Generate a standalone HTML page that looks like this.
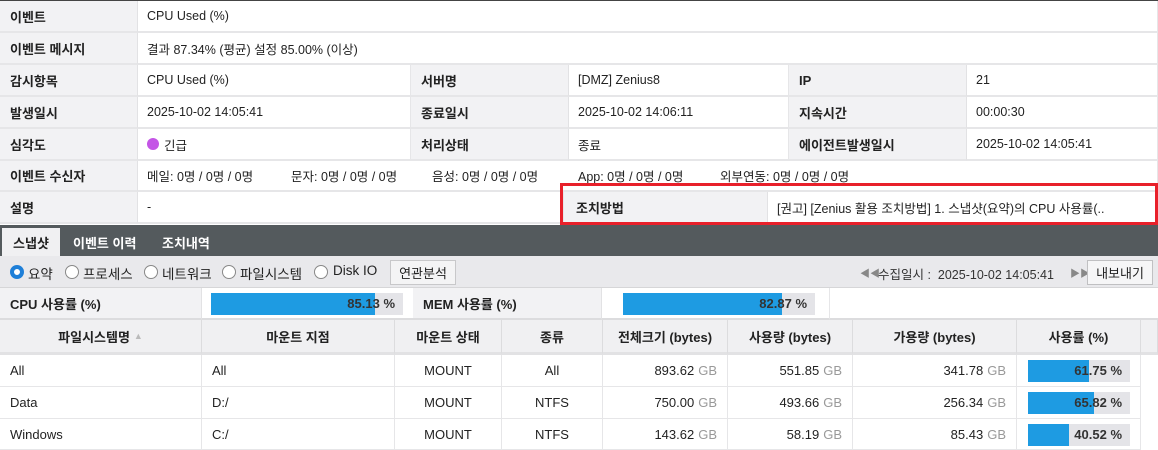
<!DOCTYPE html>
<html><head><meta charset="utf-8"><style>
*{box-sizing:border-box;margin:0;padding:0}
body{width:1158px;height:450px;overflow:hidden;background:#fff;font-family:"Liberation Sans","Noto Sans CJK KR",sans-serif;font-size:12.5px;color:#222;position:relative}
.a{position:absolute}
.l{background:#f2f2f4;font-weight:bold;font-size:13px;padding-left:10px;display:flex;align-items:center;border-right:1px solid #e2e2e4;border-bottom:2px solid #e6e6e8}
.v{padding-left:9px;display:flex;align-items:center;border-bottom:2px solid #e6e6e8;border-right:1px solid #e6e6e8;white-space:nowrap}
.th{background:#f0f0f2;font-weight:bold;font-size:13px;display:flex;align-items:center;justify-content:center;border-right:1px solid #dcdcde;border-bottom:3px solid #e2e2e4}
.td{display:flex;align-items:center;border-right:1px solid #e6e6e8;border-bottom:1px solid #e6e6e8;padding:0 10px;font-size:13px}
.r{justify-content:flex-end}.c{justify-content:center}
.gb{color:#999;margin-left:4px}
.bar{position:absolute;height:22px;background:#e4e4e8}
.bar i{position:absolute;left:0;top:0;bottom:0;background:#1e9be2}
.bar span{position:absolute;right:8px;top:3px;font-weight:bold;color:#333;font-size:13px}
.rad{position:absolute;top:265px;width:14px;height:14px;border:1px solid #888;border-radius:50%;background:#fff}
.rt{position:absolute;top:263px;font-size:13.5px}
</style></head><body>
<div class="a" style="left:0;top:0;width:1158px;height:1px;background:#444"></div>
<div class="a l" style="left:0;top:1px;width:138px;height:32px">이벤트</div>
<div class="a v" style="left:138px;top:1px;width:1020px;height:32px">CPU Used (%)</div>
<div class="a l" style="left:0;top:33px;width:138px;height:32px">이벤트 메시지</div>
<div class="a v" style="left:138px;top:33px;width:1020px;height:32px">결과 87.34% (평균) 설정 85.00% (이상)</div>

<div class="a l" style="left:0;top:65px;width:138px;height:32px">감시항목</div>
<div class="a v" style="left:138px;top:65px;width:273px;height:32px">CPU Used (%)</div>
<div class="a l" style="left:411px;top:65px;width:158px;height:32px">서버명</div>
<div class="a v" style="left:569px;top:65px;width:220px;height:32px">[DMZ] Zenius8</div>
<div class="a l" style="left:789px;top:65px;width:178px;height:32px">IP</div>
<div class="a v" style="left:967px;top:65px;width:191px;height:32px">21</div>

<div class="a l" style="left:0;top:97px;width:138px;height:32px">발생일시</div>
<div class="a v" style="left:138px;top:97px;width:273px;height:32px">2025-10-02 14:05:41</div>
<div class="a l" style="left:411px;top:97px;width:158px;height:32px">종료일시</div>
<div class="a v" style="left:569px;top:97px;width:220px;height:32px">2025-10-02 14:06:11</div>
<div class="a l" style="left:789px;top:97px;width:178px;height:32px">지속시간</div>
<div class="a v" style="left:967px;top:97px;width:191px;height:32px">00:00:30</div>

<div class="a l" style="left:0;top:129px;width:138px;height:32px">심각도</div>
<div class="a v" style="left:138px;top:129px;width:273px;height:32px"><span style="display:inline-block;width:12px;height:12px;border-radius:50%;background:#c455e6;margin-right:5px"></span>긴급</div>
<div class="a l" style="left:411px;top:129px;width:158px;height:32px">처리상태</div>
<div class="a v" style="left:569px;top:129px;width:220px;height:32px">종료</div>
<div class="a l" style="left:789px;top:129px;width:178px;height:32px">에이전트발생일시</div>
<div class="a v" style="left:967px;top:129px;width:191px;height:32px">2025-10-02 14:05:41</div>

<div class="a l" style="left:0;top:161px;width:138px;height:31px">이벤트 수신자</div>
<div class="a v" style="left:138px;top:161px;width:1020px;height:31px"><span style="width:144px">메일: 0명 / 0명 / 0명</span><span style="width:141px">문자: 0명 / 0명 / 0명</span><span style="width:146px">음성: 0명 / 0명 / 0명</span><span style="width:142px">App: 0명 / 0명 / 0명</span><span>외부연동: 0명 / 0명 / 0명</span></div>

<div class="a l" style="left:0;top:192px;width:138px;height:32px">설명</div>
<div class="a v" style="left:138px;top:192px;width:426px;height:32px">-</div>
<div class="a l" style="left:564px;top:192px;width:204px;height:32px;padding-left:12px">조치방법</div>
<div class="a v" style="left:768px;top:192px;width:390px;height:32px;overflow:hidden">[권고] [Zenius 활용 조치방법] 1. 스냅샷(요약)의 CPU 사용률(..</div>
<div class="a" style="left:560px;top:183px;width:598px;height:42px;border:3px solid #e8202a"></div>

<div class="a" style="left:0;top:225px;width:1158px;height:31px;background:#545a5d"></div>
<div class="a" style="left:2px;top:228px;width:58px;height:28px;background:#f0f0f2;font-weight:bold;font-size:13px;display:flex;align-items:center;justify-content:center">스냅샷</div>
<div class="a" style="left:73px;top:228px;height:28px;color:#fff;font-weight:bold;font-size:13px;display:flex;align-items:center">이벤트 이력</div>
<div class="a" style="left:162px;top:228px;height:28px;color:#fff;font-weight:bold;font-size:13px;display:flex;align-items:center">조치내역</div>

<div class="a" style="left:0;top:256px;width:1158px;height:32px;background:#e9e9ec;border-bottom:1px solid #d6d6d8"></div>
<span class="rad" style="left:10px;border:4px solid #1e7fd8"></span><span class="rt" style="left:28px">요약</span>
<span class="rad" style="left:65px"></span><span class="rt" style="left:83px">프로세스</span>
<span class="rad" style="left:144px"></span><span class="rt" style="left:162px">네트워크</span>
<span class="rad" style="left:222px"></span><span class="rt" style="left:240px">파일시스템</span>
<span class="rad" style="left:314px"></span><span class="rt" style="left:333px">Disk IO</span>
<div class="a" style="left:390px;top:260px;width:66px;height:25px;border:1px solid #c8c8ca;background:#f4f4f5;display:flex;align-items:center;justify-content:center;font-size:13px">연관분석</div>
<div class="a" style="left:860px;top:265px;color:#888;font-size:10px">◀◀</div>
<div class="a" style="left:878px;top:264px;white-space:nowrap;color:#333;font-size:12.5px">수집일시 : &nbsp;2025-10-02 14:05:41</div>
<div class="a" style="left:1070px;top:265px;color:#888;font-size:10px">▶▶</div>
<div class="a" style="left:1087px;top:260px;width:66px;height:25px;border:1px solid #c0c0c2;background:#f6f6f7;display:flex;align-items:center;justify-content:center;font-size:13px">내보내기</div>

<div class="a l" style="left:0;top:288px;width:202px;height:32px;border-bottom:2px solid #dcdcde">CPU 사용률 (%)</div>
<div class="a" style="left:202px;top:288px;width:211px;height:32px;border-bottom:2px solid #dcdcde"></div>
<div class="bar" style="left:211px;top:293px;width:192px"><i style="width:164px"></i><span>85.13 %</span></div>
<div class="a l" style="left:413px;top:288px;width:189px;height:32px;border-bottom:2px solid #dcdcde">MEM 사용률 (%)</div>
<div class="a" style="left:602px;top:288px;width:228px;height:32px;border-right:1px solid #e6e6e8;border-bottom:2px solid #dcdcde"></div>
<div class="a" style="left:830px;top:288px;width:328px;height:32px;border-bottom:2px solid #dcdcde"></div>
<div class="bar" style="left:623px;top:293px;width:192px"><i style="width:159px"></i><span>82.87 %</span></div>

<div class="a th" style="left:0;top:320px;width:202px;height:35px">파일시스템명 <span style="color:#bbb;font-size:9px;margin-left:4px">▲</span></div>
<div class="a th" style="left:202px;top:320px;width:193px;height:35px">마운트 지점</div>
<div class="a th" style="left:395px;top:320px;width:107px;height:35px">마운트 상태</div>
<div class="a th" style="left:502px;top:320px;width:101px;height:35px">종류</div>
<div class="a th" style="left:603px;top:320px;width:125px;height:35px">전체크기 (bytes)</div>
<div class="a th" style="left:728px;top:320px;width:125px;height:35px">사용량 (bytes)</div>
<div class="a th" style="left:853px;top:320px;width:164px;height:35px">가용량 (bytes)</div>
<div class="a th" style="left:1017px;top:320px;width:124px;height:35px">사용률 (%)</div>
<div class="a th" style="left:1141px;top:320px;width:17px;height:35px"></div>

<div class="a td" style="left:0;top:355px;width:202px;height:32px">All</div>
<div class="a td" style="left:202px;top:355px;width:193px;height:32px">All</div>
<div class="a td c" style="left:395px;top:355px;width:107px;height:32px">MOUNT</div>
<div class="a td c" style="left:502px;top:355px;width:101px;height:32px">All</div>
<div class="a td r" style="left:603px;top:355px;width:125px;height:32px">893.62<span class="gb">GB</span></div>
<div class="a td r" style="left:728px;top:355px;width:125px;height:32px">551.85<span class="gb">GB</span></div>
<div class="a td r" style="left:853px;top:355px;width:164px;height:32px">341.78<span class="gb">GB</span></div>
<div class="a td" style="left:1017px;top:355px;width:124px;height:32px"></div>
<div class="bar" style="left:1028px;top:360px;width:102px"><i style="width:61px"></i><span>61.75 %</span></div>

<div class="a td" style="left:0;top:387px;width:202px;height:32px">Data</div>
<div class="a td" style="left:202px;top:387px;width:193px;height:32px">D:/</div>
<div class="a td c" style="left:395px;top:387px;width:107px;height:32px">MOUNT</div>
<div class="a td c" style="left:502px;top:387px;width:101px;height:32px">NTFS</div>
<div class="a td r" style="left:603px;top:387px;width:125px;height:32px">750.00<span class="gb">GB</span></div>
<div class="a td r" style="left:728px;top:387px;width:125px;height:32px">493.66<span class="gb">GB</span></div>
<div class="a td r" style="left:853px;top:387px;width:164px;height:32px">256.34<span class="gb">GB</span></div>
<div class="a td" style="left:1017px;top:387px;width:124px;height:32px"></div>
<div class="bar" style="left:1028px;top:392px;width:102px"><i style="width:66px"></i><span>65.82 %</span></div>

<div class="a td" style="left:0;top:419px;width:202px;height:31px">Windows</div>
<div class="a td" style="left:202px;top:419px;width:193px;height:31px">C:/</div>
<div class="a td c" style="left:395px;top:419px;width:107px;height:31px">MOUNT</div>
<div class="a td c" style="left:502px;top:419px;width:101px;height:31px">NTFS</div>
<div class="a td r" style="left:603px;top:419px;width:125px;height:31px">143.62<span class="gb">GB</span></div>
<div class="a td r" style="left:728px;top:419px;width:125px;height:31px">58.19<span class="gb">GB</span></div>
<div class="a td r" style="left:853px;top:419px;width:164px;height:31px">85.43<span class="gb">GB</span></div>
<div class="a td" style="left:1017px;top:419px;width:124px;height:31px"></div>
<div class="bar" style="left:1028px;top:424px;width:102px"><i style="width:41px"></i><span>40.52 %</span></div>
</body></html>
